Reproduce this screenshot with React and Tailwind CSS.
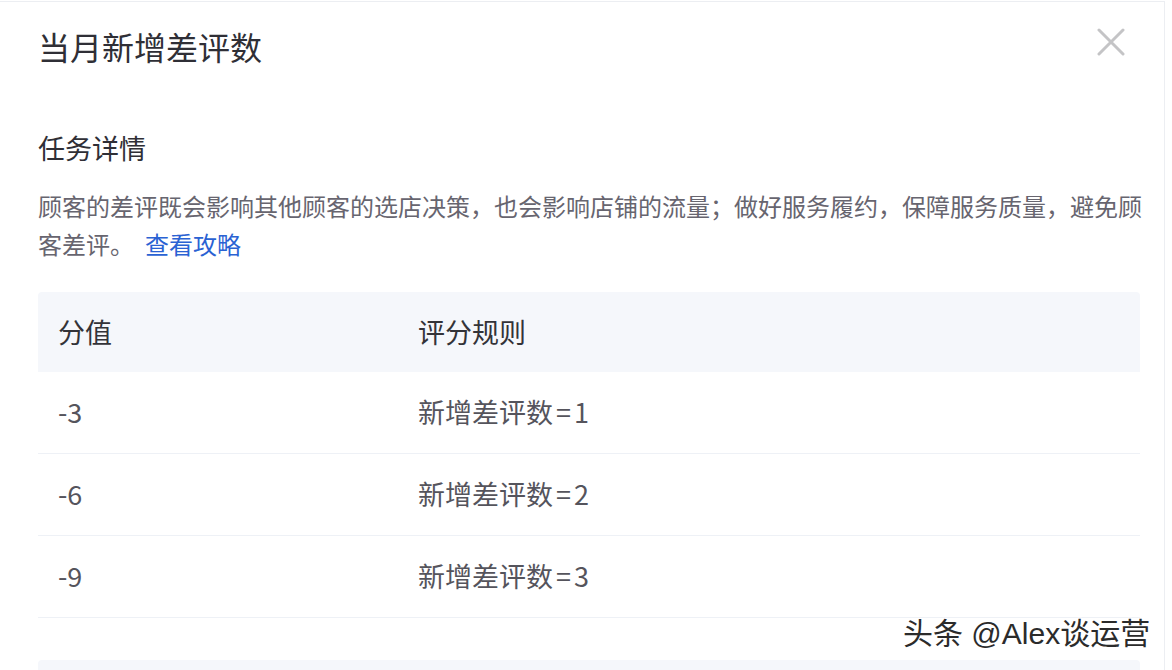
const rows = [
  { score: "-3", rule: "1" },
  { score: "-6", rule: "2" },
  { score: "-9", rule: "3" },
];

const CloseIcon = () => (
  <svg width="28" height="28" viewBox="0 0 28 28" fill="none">
    <path
      d="M2 2L26 26M26 2L2 26"
      stroke="#c4c4c6"
      strokeWidth="3"
      strokeLinecap="round"
    />
  </svg>
);

const App = () => {
  return (
    <div
      className="relative h-[670px] w-full overflow-hidden bg-white"
      style={{ fontFamily: '"Noto Sans CJK SC", "Noto Sans", sans-serif' }}
    >
      <div className="mt-[1px] h-[700px] w-[1165px] border-t border-r border-[#eceef2] bg-white">
        <div className="flex items-center justify-between pl-[38px] pr-[39px] pt-[22px]">
          <h1 className="text-[32px] leading-[44px] text-[#2f2f36]">
            当月新增差评数
          </h1>
          <button className="mt-[-8px]">
            <CloseIcon />
          </button>
        </div>

        <div className="px-[38px]">
          <h2 className="mt-[61px] text-[27px] leading-[38px] text-[#2f2f36]">
            任务详情
          </h2>
          <p className="mt-[20px] w-[1110px] text-[24px] leading-[38px] text-[#67656f]">
            顾客的差评既会影响其他顾客的选店决策，也会影响店铺的流量；做好服务履约，保障服务质量，避免顾客差评。
            <a href="#" className="ml-[11px] text-[#2a62d3]">
              查看攻略
            </a>
          </p>

          <div className="mt-[29px] w-[1102px]">
            <div className="flex h-[80px] items-center rounded-t-[4px] bg-[#f5f7fb] text-[27px] text-[#333338]">
              <div className="w-[360px] px-[20px]">分值</div>
              <div className="flex-1 px-[20px]">评分规则</div>
            </div>
            {rows.map((row) => (
              <div
                key={row.score}
                className="flex h-[82px] items-center border-b border-[#eef1f6] text-[27px] text-[#55545c]"
              >
                <div className="w-[360px] px-[20px]">{row.score}</div>
                <div className="flex-1 px-[20px]">
                  新增差评数<span className="mx-[3px]">=</span>
                  {row.rule}
                </div>
              </div>
            ))}
          </div>

          <div className="mt-[42px] h-[40px] w-[1102px] rounded-t-[4px] bg-[#f5f7fb]" />
        </div>
      </div>

      <div
        className="absolute left-[903px] top-[614px] text-[30px] leading-[40px] text-[#2b2b2b]"
        style={{
          fontFamily: '"Liberation Sans", "Noto Sans CJK SC", sans-serif',
          textShadow: "1px 1px 0 #fff, -1px -1px 0 #fff, 1px -1px 0 #fff, -1px 1px 0 #fff",
        }}
      >
        头条 @Alex谈运营
      </div>
    </div>
  );
};

export default App;
